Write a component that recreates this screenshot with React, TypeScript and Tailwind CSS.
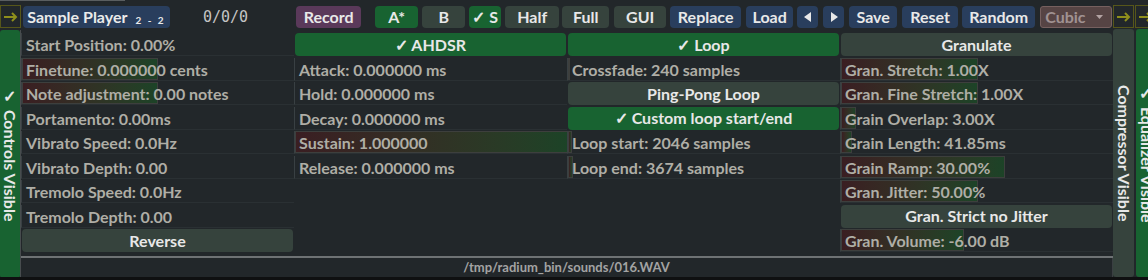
import type { ReactNode } from 'react';

const tones = {
  green: 'bg-[#186331] text-[#e8e8e8]',
  grey: 'bg-[#36433d] text-[#e8e8e8]',
  blue: 'bg-[#293e5d] text-[#e8e8e8]',
  purple: 'bg-[#5a395a] text-[#e8e8e8]',
};

type Tone = keyof typeof tones;

const Arrow = ({ className }: { className: string }) => (
  <div className={`h-[23px] w-[21px] shrink-0 border border-[#56561a] flex items-center justify-center ${className}`}>
    <svg width="14" height="10" viewBox="0 0 14 10" fill="none" stroke="#8f8f1c" strokeWidth="2">
      <path d="M0 5h12M8 1l4 4-4 4" />
    </svg>
  </div>
);

const TopBtn = ({ children, tone, className }: { children: ReactNode; tone: Tone; className: string }) => (
  <div className={`mt-[6px] h-[22px] shrink-0 rounded-[4px] flex items-center justify-center text-[16px] font-bold ${tones[tone]} ${className}`}>
    {children}
  </div>
);

const ColBtn = ({ label, tone }: { label: string; tone: Tone }) => (
  <div className={`h-[23px] shrink-0 ml-[1px] w-[271px] rounded-[4px] flex items-center justify-center text-[16px] font-bold ${tones[tone]}`}>
    {label}
  </div>
);

const Slider = ({ label, fill = 0 }: { label: string; fill?: number }) => (
  <div className="relative h-[23px] shrink-0 border-l border-b border-l-[#394043] border-b-[#2a3033]">
    {fill > 0 && (
      <div
        className="absolute left-0 top-0 bottom-0 border border-[#3d3f3d] bg-linear-to-r from-[#3a1e22] to-[#1c4327]"
        style={{ width: fill }}
      />
    )}
    <span className="relative block pl-[4px] leading-[23px] text-[16px] font-bold text-[#afaea6] whitespace-nowrap">
      {label}
    </span>
  </div>
);

const SideBar = ({ label, tone, className }: { label: string; tone: Tone; className: string }) => (
  <div className={`h-[248px] shrink-0 rounded-[3px] flex items-center justify-center overflow-hidden ${tones[tone]} ${className}`}>
    <span className="[writing-mode:vertical-rl] text-[16px] font-bold whitespace-nowrap">{label}</span>
  </div>
);

export default function App() {
  return (
    <div className="w-[1148px] h-[280px] overflow-hidden bg-[#22272a] flex flex-col font-[Lato,sans-serif]">
      {/* top bar */}
      <div className="h-[30px] shrink-0 flex items-start relative">
        <div className="absolute left-0 top-0 h-[1px] w-[125px] bg-[#5a5e60]" />
        <Arrow className="mt-[5px]" />
        <TopBtn tone="blue" className="ml-[2px] w-[147px] text-[#eaeaea]">
          Sample Player
          <span className="ml-[8px] text-[10px] translate-y-[3px] tracking-[2px]">2 - 2</span>
        </TopBtn>
        <div className="mt-[6px] ml-[33px] h-[22px] leading-[22px] font-['DejaVu_Sans_Mono',monospace] text-[15px] text-[#c4c4c4]">
          0/0/0
        </div>
        <div className="ml-[45px] h-[29px] w-[1px] bg-[#4c5154]" />
        <TopBtn tone="purple" className="ml-[3px] w-[65px]">Record</TopBtn>
        <TopBtn tone="green" className="ml-[14px] w-[43px]">A*</TopBtn>
        <TopBtn tone="grey" className="ml-[4px] w-[43px]">B</TopBtn>
        <TopBtn tone="green" className="ml-[4px] w-[32px]">✓ S</TopBtn>
        <TopBtn tone="grey" className="ml-[4px] w-[54px]">Half</TopBtn>
        <TopBtn tone="grey" className="ml-[3px] w-[47px]">Full</TopBtn>
        <TopBtn tone="grey" className="ml-[5px] w-[52px]">GUI</TopBtn>
        <TopBtn tone="blue" className="ml-[4px] w-[71px]">Replace</TopBtn>
        <TopBtn tone="blue" className="ml-[5px] w-[47px]">Load</TopBtn>
        <TopBtn tone="blue" className="ml-[4px] w-[21px]">
          <svg width="8" height="10" viewBox="0 0 8 10"><path d="M7 0v10L0 5z" fill="#e8e8e8" /></svg>
        </TopBtn>
        <TopBtn tone="blue" className="ml-[5px] w-[21px]">
          <svg width="8" height="10" viewBox="0 0 8 10"><path d="M1 0v10l7-5z" fill="#e8e8e8" /></svg>
        </TopBtn>
        <TopBtn tone="blue" className="ml-[5px] w-[48px]">Save</TopBtn>
        <TopBtn tone="blue" className="ml-[5px] w-[56px]">Reset</TopBtn>
        <TopBtn tone="blue" className="ml-[4px] w-[73px]">Random</TopBtn>
        <div className="mt-[6px] ml-[5px] h-[22px] w-[72px] shrink-0 rounded-[3px] border border-[#76605f] bg-[#564444] flex items-center justify-between pl-[4px] pr-[8px] text-[16px] font-bold text-[#a09292]">
          Cubic
          <svg width="7" height="4" viewBox="0 0 7 4"><path d="M0 0h7L3.5 4z" fill="#b3a3a3" /></svg>
        </div>
        <Arrow className="mt-[5px] ml-[1px]" />
        <Arrow className="mt-[5px] ml-[1px]" />
      </div>

      {/* main */}
      <div className="h-[247px] shrink-0 flex items-start">
        <SideBar tone="green" label="✓ Controls Visible" className="w-[20px]" />

        <div className="w-[1093px] shrink-0 h-[247px] flex flex-col border-l border-[#474c4e]">
          <div className="flex pt-[3px]">
            <div className="w-[273px] flex flex-col gap-[1.5px]">
              <Slider label="Start Position: 0.00%" />
              <Slider label="Finetune: 0.000000 cents" fill={136} />
              <Slider label="Note adjustment: 0.00 notes" fill={136} />
              <Slider label="Portamento: 0.00ms" />
              <Slider label="Vibrato Speed: 0.0Hz" />
              <Slider label="Vibrato Depth: 0.00" />
              <Slider label="Tremolo Speed: 0.0Hz" />
              <Slider label="Tremolo Depth: 0.00" />
              <ColBtn tone="grey" label="Reverse" />
            </div>
            <div className="w-[273px] flex flex-col gap-[1.5px]">
              <ColBtn tone="green" label="✓ AHDSR" />
              <Slider label="Attack: 0.000000 ms" />
              <Slider label="Hold: 0.000000 ms" />
              <Slider label="Decay: 0.000000 ms" />
              <Slider label="Sustain: 1.000000" fill={273} />
              <Slider label="Release: 0.000000 ms" />
            </div>
            <div className="w-[273px] flex flex-col gap-[1.5px]">
              <ColBtn tone="green" label="✓ Loop" />
              <Slider label="Crossfade: 240 samples" fill={2} />
              <ColBtn tone="grey" label="Ping-Pong Loop" />
              <ColBtn tone="green" label="✓ Custom loop start/end" />
              <Slider label="Loop start: 2046 samples" fill={4} />
              <Slider label="Loop end: 3674 samples" fill={5} />
            </div>
            <div className="w-[273px] flex flex-col gap-[1.5px]">
              <ColBtn tone="grey" label="Granulate" />
              <Slider label="Gran. Stretch: 1.00X" fill={137} />
              <Slider label="Gran. Fine Stretch: 1.00X" fill={137} />
              <Slider label="Grain Overlap: 3.00X" fill={15} />
              <Slider label="Grain Length: 41.85ms" fill={11} />
              <Slider label="Grain Ramp: 30.00%" fill={164} />
              <Slider label="Gran. Jitter: 50.00%" fill={137} />
              <ColBtn tone="grey" label="Gran. Strict no Jitter" />
              <Slider label="Gran. Volume: -6.00 dB" fill={123} />
            </div>
          </div>
          <div className="mt-[4px] h-[2px] bg-[#6e7274]" />
          <div className="flex-1 flex items-center justify-center border-r border-[#3a3f42] text-[13px] font-bold text-[#a3a3a3]">
            /tmp/radium_bin/sounds/016.WAV
          </div>
        </div>

        <SideBar tone="grey" label="Compressor Visible" className="w-[21px] -mt-[1px]" />
        <SideBar tone="green" label="✓ Equalizer Visible" className="ml-[2px] w-[21px] -mt-[1px]" />
      </div>

      <div className="flex-1 bg-[#0f1011]" />
    </div>
  );
}
